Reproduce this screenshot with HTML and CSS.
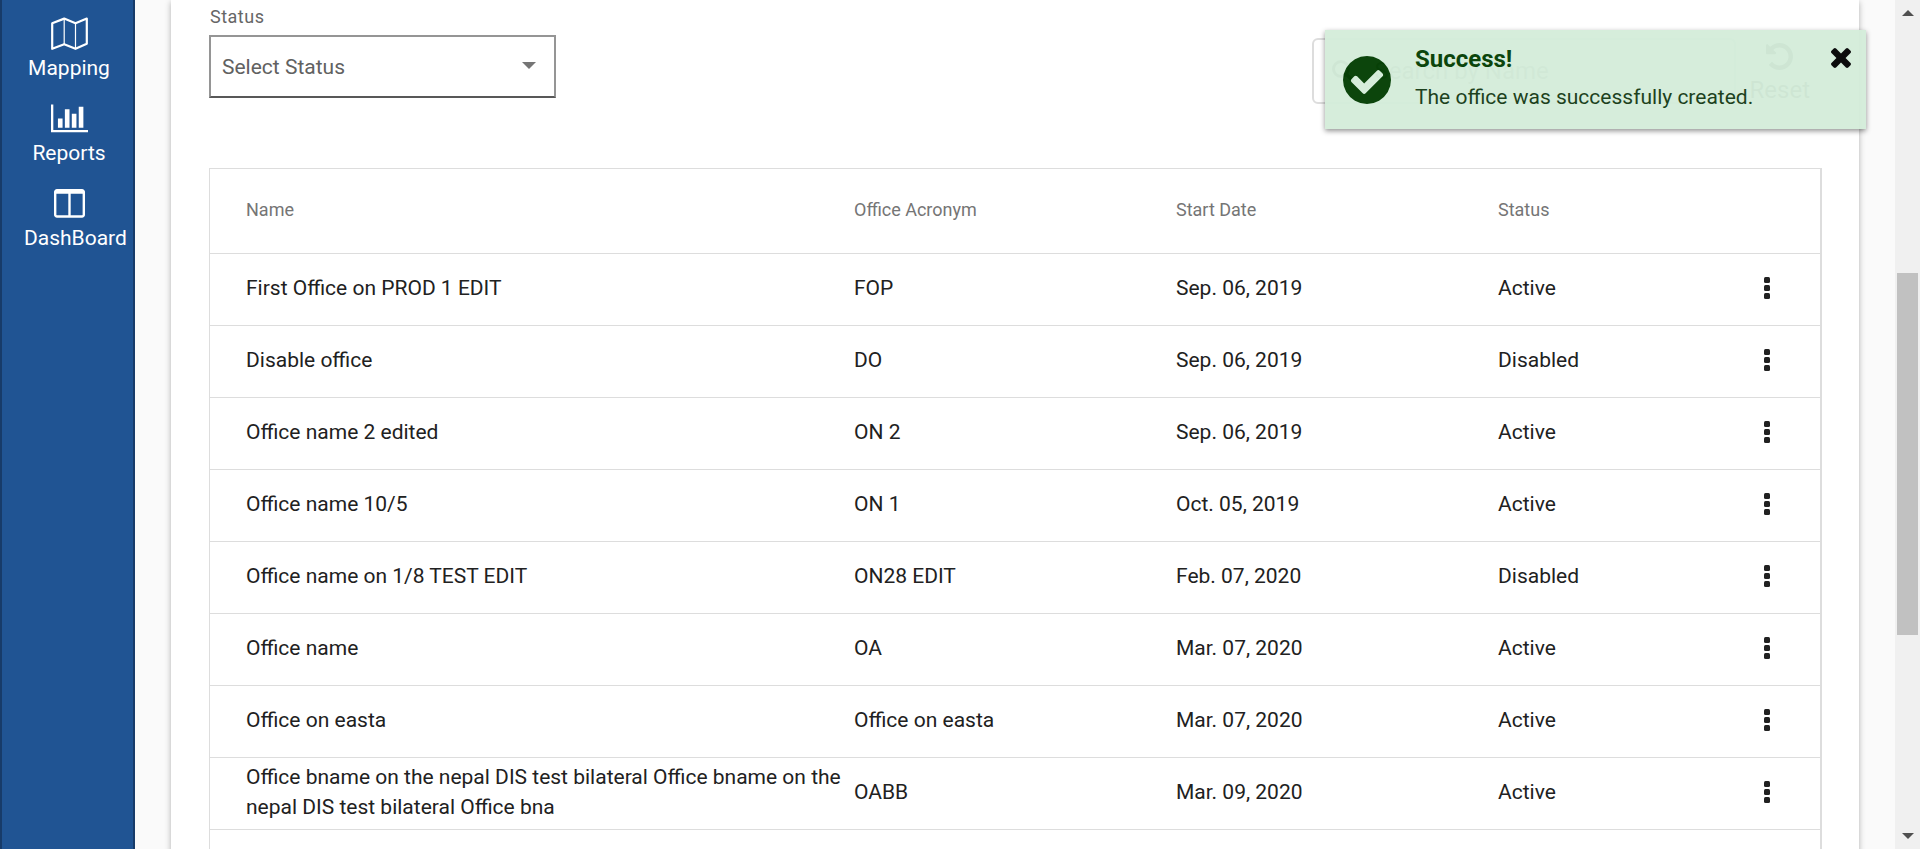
FILE: index.html
```html
<!DOCTYPE html>
<html lang="en">
<head>
<meta charset="utf-8">
<title>Offices</title>
<link rel="stylesheet" href="styles.css">
</head>
<body>
<svg class="defs" aria-hidden="true">
  <symbol id="dots" viewBox="0 0 6 22"><rect width="6" height="6" rx="1.5"/><rect y="8" width="6" height="6" rx="1.5"/><rect y="16" width="6" height="6" rx="1.5"/></symbol>
</svg>
<div class="app">
  <nav class="sidebar">
    <a class="nav-item" href="#mapping">
      <svg class="nav-icon" viewBox="0 0 37 34" width="37" height="34" fill="none" stroke="#fff"><path d="M1.2 6.2 13.2 1.6 24.5 6.2 35.8 1.6V26.8L24.5 31.8 13.2 27.2 1.2 31.8Z" stroke-width="2.2" stroke-linejoin="round"/><path d="M13.2 2V27M24.5 6V31.500" stroke-width="1.200"/></svg>
      <span>Mapping</span>
    </a>
    <a class="nav-item" href="#reports">
      <svg class="nav-icon" viewBox="0 -140 2048 1880" width="37" height="34" fill="#fff"><path d="M640 768v512h-256v-512h256zm384-512v1024h-256v-1024h256zm1024 1152v128h-2048v-1536h128v1408h1920zm-640-896v768h-256v-768h256zm384-384v1152h-256v-1152h256z"/></svg>
      <span>Reports</span>
    </a>
    <a class="nav-item" href="#dashboard">
      <svg class="nav-icon" viewBox="-160 -110 1984 1824" width="37" height="34" fill="#fff"><path d="M160 1408h608v-1152h-640v1120q0 13 9.500 22.500t22.500 9.500zm1376-32v-1120h-640v1152h608q13 0 22.500-9.500t9.500-22.500zm128-1216v1216q0 66-47 113t-113 47h-1344q-66 0-113-47t-47-113v-1216q0-66 47-113t113-47h1344q66 0 113 47t47 113z"/></svg>
      <span>DashBoard</span>
    </a>
  </nav>
  <main class="main">
    <section class="card">
      <div class="filters">
        <div class="field">
          <label for="status">Status</label>
          <div class="select-wrap">
            <select id="status"><option>Select Status</option><option>Active</option><option>Disabled</option></select>
            <svg class="caret" viewBox="0 0 14 7" width="14" height="7"><path d="M0 0h14l-7 7z"/></svg>
          </div>
        </div>
        <div class="tools">
          <div class="search">
            <svg viewBox="0 0 22 22" width="22" height="22" fill="none" stroke="#757575"><circle cx="9" cy="9" r="7.500" stroke-width="3"/><path d="M14.500 14.500 20 20" stroke-width="3.500" stroke-linecap="round"/></svg>
            <input type="text" placeholder="Search by Name" aria-label="Search by Name">
          </div>
          <button class="reset" type="button">
            <svg viewBox="128 128 1536 1536" width="27" height="27" fill="currentColor"><path d="M1664 896q0 156-61 298t-164 245-245 164-298 61q-172 0-327-72.500t-264-204.500q-7-10-6.500-22.500t8.500-20.500l137-138q10-9 25-9 16 2 23 12 73 95 179 147t225 52q104 0 198.500-40.500t163.500-109.500 109.500-163.500 40.500-198.500-40.500-198.500-109.500-163.500-163.500-109.500-198.500-40.500q-98 0-188 35.500t-160 101.500l137 138q31 30 14 69-17 40-59 40h-448q-26 0-45-19t-19-45v-448q0-42 40-59 39-17 69 14l130 129q107-101 244.500-156.500t284.500-55.500q156 0 298 61t245 164 164 245 61 298z"/></svg>
            <span>Reset</span>
          </button>
        </div>
      </div>
      <table class="offices">
        <thead>
          <tr><th class="col-name">Name</th><th>Office Acronym</th><th>Start Date</th><th class="col-status">Status</th><th class="col-actions"></th></tr>
        </thead>
        <tbody>
          <tr><td>First Office on PROD 1 EDIT</td><td>FOP</td><td>Sep. 06, 2019</td><td>Active</td><td class="actions"><button type="button" aria-label="Actions"><svg width="6" height="22"><use href="#dots"/></svg></button></td></tr>
          <tr><td>Disable office</td><td>DO</td><td>Sep. 06, 2019</td><td>Disabled</td><td class="actions"><button type="button" aria-label="Actions"><svg width="6" height="22"><use href="#dots"/></svg></button></td></tr>
          <tr><td>Office name 2 edited</td><td>ON 2</td><td>Sep. 06, 2019</td><td>Active</td><td class="actions"><button type="button" aria-label="Actions"><svg width="6" height="22"><use href="#dots"/></svg></button></td></tr>
          <tr><td>Office name 10/5</td><td>ON 1</td><td>Oct. 05, 2019</td><td>Active</td><td class="actions"><button type="button" aria-label="Actions"><svg width="6" height="22"><use href="#dots"/></svg></button></td></tr>
          <tr><td>Office name on 1/8 TEST EDIT</td><td>ON28 EDIT</td><td>Feb. 07, 2020</td><td>Disabled</td><td class="actions"><button type="button" aria-label="Actions"><svg width="6" height="22"><use href="#dots"/></svg></button></td></tr>
          <tr><td>Office name</td><td>OA</td><td>Mar. 07, 2020</td><td>Active</td><td class="actions"><button type="button" aria-label="Actions"><svg width="6" height="22"><use href="#dots"/></svg></button></td></tr>
          <tr><td>Office on easta</td><td>Office on easta</td><td>Mar. 07, 2020</td><td>Active</td><td class="actions"><button type="button" aria-label="Actions"><svg width="6" height="22"><use href="#dots"/></svg></button></td></tr>
          <tr><td>Office bname on the nepal DIS test bilateral Office bname on the nepal DIS test bilateral Office bna</td><td>OABB</td><td>Mar. 09, 2020</td><td>Active</td><td class="actions"><button type="button" aria-label="Actions"><svg width="6" height="22"><use href="#dots"/></svg></button></td></tr>
          <tr><td></td><td></td><td></td><td></td><td></td></tr>
        </tbody>
      </table>
    </section>
  </main>
  <div class="scrollbar" aria-hidden="true">
    <svg viewBox="0 0 12 6" width="12" height="6"><path d="M6 0 12 6H0z"/></svg>
    <div class="track"><div class="thumb"></div></div>
    <svg viewBox="0 0 12 6" width="12" height="6"><path d="M0 0h12L6 6z"/></svg>
  </div>
</div>
<div class="toast" role="alert">
  <svg class="toast-icon" viewBox="0 0 1536 1536" width="48" height="48"><path d="M1284 606q0-28-18-46l-91-90q-19-19-45-19t-45 19l-408 407-226-226q-19-19-45-19t-45 19l-91 90q-18 18-18 46 0 27 18 45l362 362q19 19 45 19 27 0 46-19l543-543q18-18 18-45zm252 162q0 209-103 385.500t-279.500 279.500-385.500 103-385.500-103-279.500-279.500-103-385.500 103-385.500 279.500-279.500 385.500-103 385.500 103 279.500 279.500 103 385.500z"/></svg>
  <div class="toast-body">
    <strong>Success!</strong>
    <span>The office was successfully created.</span>
  </div>
  <button class="close" type="button" aria-label="Close">
    <svg viewBox="302 366 1188 1188" width="20" height="20"><path d="M1490 1322q0 40-28 68l-136 136q-28 28-68 28t-68-28l-294-294-294 294q-28 28-68 28t-68-28l-136-136q-28-28-28-68t28-68l294-294-294-294q-28-28-28-68t28-68l136-136q28-28 68-28t68 28l294 294 294-294q28-28 68-28t68 28l136 136q28 28 28 68t-28 68l-294 294 294 294q28 28 28 68z"/></svg>
  </button>
</div>
</body>
</html>
```
FILE: styles.css
```css
* { box-sizing: border-box; }
body {
  margin: 0;
  font-family: Roboto, "Liberation Sans", sans-serif;
  font-size: 21px;
  line-height: 30px;
  color: #212121;
  background: #fafafa;
  overflow: hidden;
}
button { padding: 0; border: 0; background: none; font: inherit; cursor: pointer; }
svg { display: block; }
.defs { position: absolute; width: 0; height: 0; }
.app { display: flex; height: 100vh; overflow: hidden; }

.sidebar {
  flex: none;
  width: 135px;
  padding: 17px 19px 0 22px;
  background: #205493;
  border: solid #173b69;
  border-width: 0 2px;
}
.nav-item {
  display: block;
  height: 85px;
  color: #fff;
  text-align: center;
  text-decoration: none;
}
.nav-icon { margin: 0 auto 3px; }
.nav-item span { display: block; line-height: 28px; }

.main { flex: 1; min-width: 0; padding: 0 36px; }
.card {
  min-height: 100%;
  padding: 0 37px 0 38px;
  background: #fff;
  box-shadow: 0 2px 6px rgba(0, 0, 0, .3);
}
.filters {
  display: flex;
  justify-content: space-between;
  align-items: flex-start;
  height: 168px;
}
.field { width: 347px; }
.field label {
  display: block;
  height: 35px;
  padding: 5px 0 0 1px;
  font-size: 18px;
  line-height: 24px;
  letter-spacing: 0.5px;
  color: #666;
}
.select-wrap { position: relative; }
.select-wrap select {
  display: block;
  width: 100%;
  height: 63px;
  padding: 0 11px;
  appearance: none;
  border: 2px solid #959595;
  border-bottom-color: #585858;
  border-radius: 0;
  background: #fff;
  color: #616161;
  font: inherit;
}
.caret { position: absolute; right: 20px; top: 27px; fill: #757575; pointer-events: none; }

.tools { display: flex; gap: 14px; padding: 38px 12px 0 0; }
.search {
  display: flex;
  align-items: center;
  gap: 21px;
  width: 424px;
  height: 66px;
  padding: 0 18px;
  border: 2px solid #ddd;
  border-radius: 6px;
}
.search input {
  flex: 1;
  min-width: 0;
  padding: 0;
  border: 0;
  background: none;
  font: inherit;
  font-size: 24px;
}
.search input::placeholder { color: #999; opacity: 1; }
.reset {
  display: flex;
  flex-direction: column;
  align-items: center;
  gap: 5px;
  padding-top: 5px;
  color: #616161;
  font-size: 24px;
}

.offices {
  width: 100%;
  table-layout: fixed;
  border-collapse: separate;
  border-spacing: 0;
  border: 1px solid #ddd;
  border-right-width: 2px;
  border-bottom: 0;
}
.offices th, .offices td {
  height: 72px;
  padding: 0 0 3px;
  border-bottom: 1px solid #ddd;
  text-align: left;
  vertical-align: middle;
}
.offices th {
  width: 20%;
  height: 85px;
  color: #757575;
  font-size: 18px;
  font-weight: 400;
}
.offices th:first-child, .offices td:first-child { padding-left: 36px; }
.offices .col-name { width: 40%; }
.offices .col-status, .offices .col-actions { width: 10%; }
.offices .actions { padding-right: 50px; }
.actions button { display: block; margin-left: auto; }
.actions svg { fill: #212121; }

.scrollbar {
  flex: none;
  display: flex;
  flex-direction: column;
  align-items: center;
  width: 25px;
  padding: 10px 2px;
  background: #f0f0f0;
}
.scrollbar svg { fill: #505050; }
.track { flex: 1; align-self: stretch; padding: 257px 0 198px; }
.thumb { height: 100%; background: #c1c1c1; }

.toast {
  position: absolute;
  top: 30px;
  right: 54px;
  display: flex;
  width: 541px;
  min-height: 99px;
  padding: 11px 15px 0 18px;
  background: #d4edda;
  box-shadow: 0 2px 5px rgba(0, 0, 0, .45);
  opacity: .95;
}
.toast-icon { margin: 15px 24px 0 0; fill: #003c00; }
.toast-body { flex: 1; display: flex; flex-direction: column; color: #003c00; }
.toast-body strong { font-size: 24px; line-height: 36px; }
.toast-body span { line-height: 40px; color: #123812; }
.close { align-self: flex-start; margin-top: 7px; }
```
